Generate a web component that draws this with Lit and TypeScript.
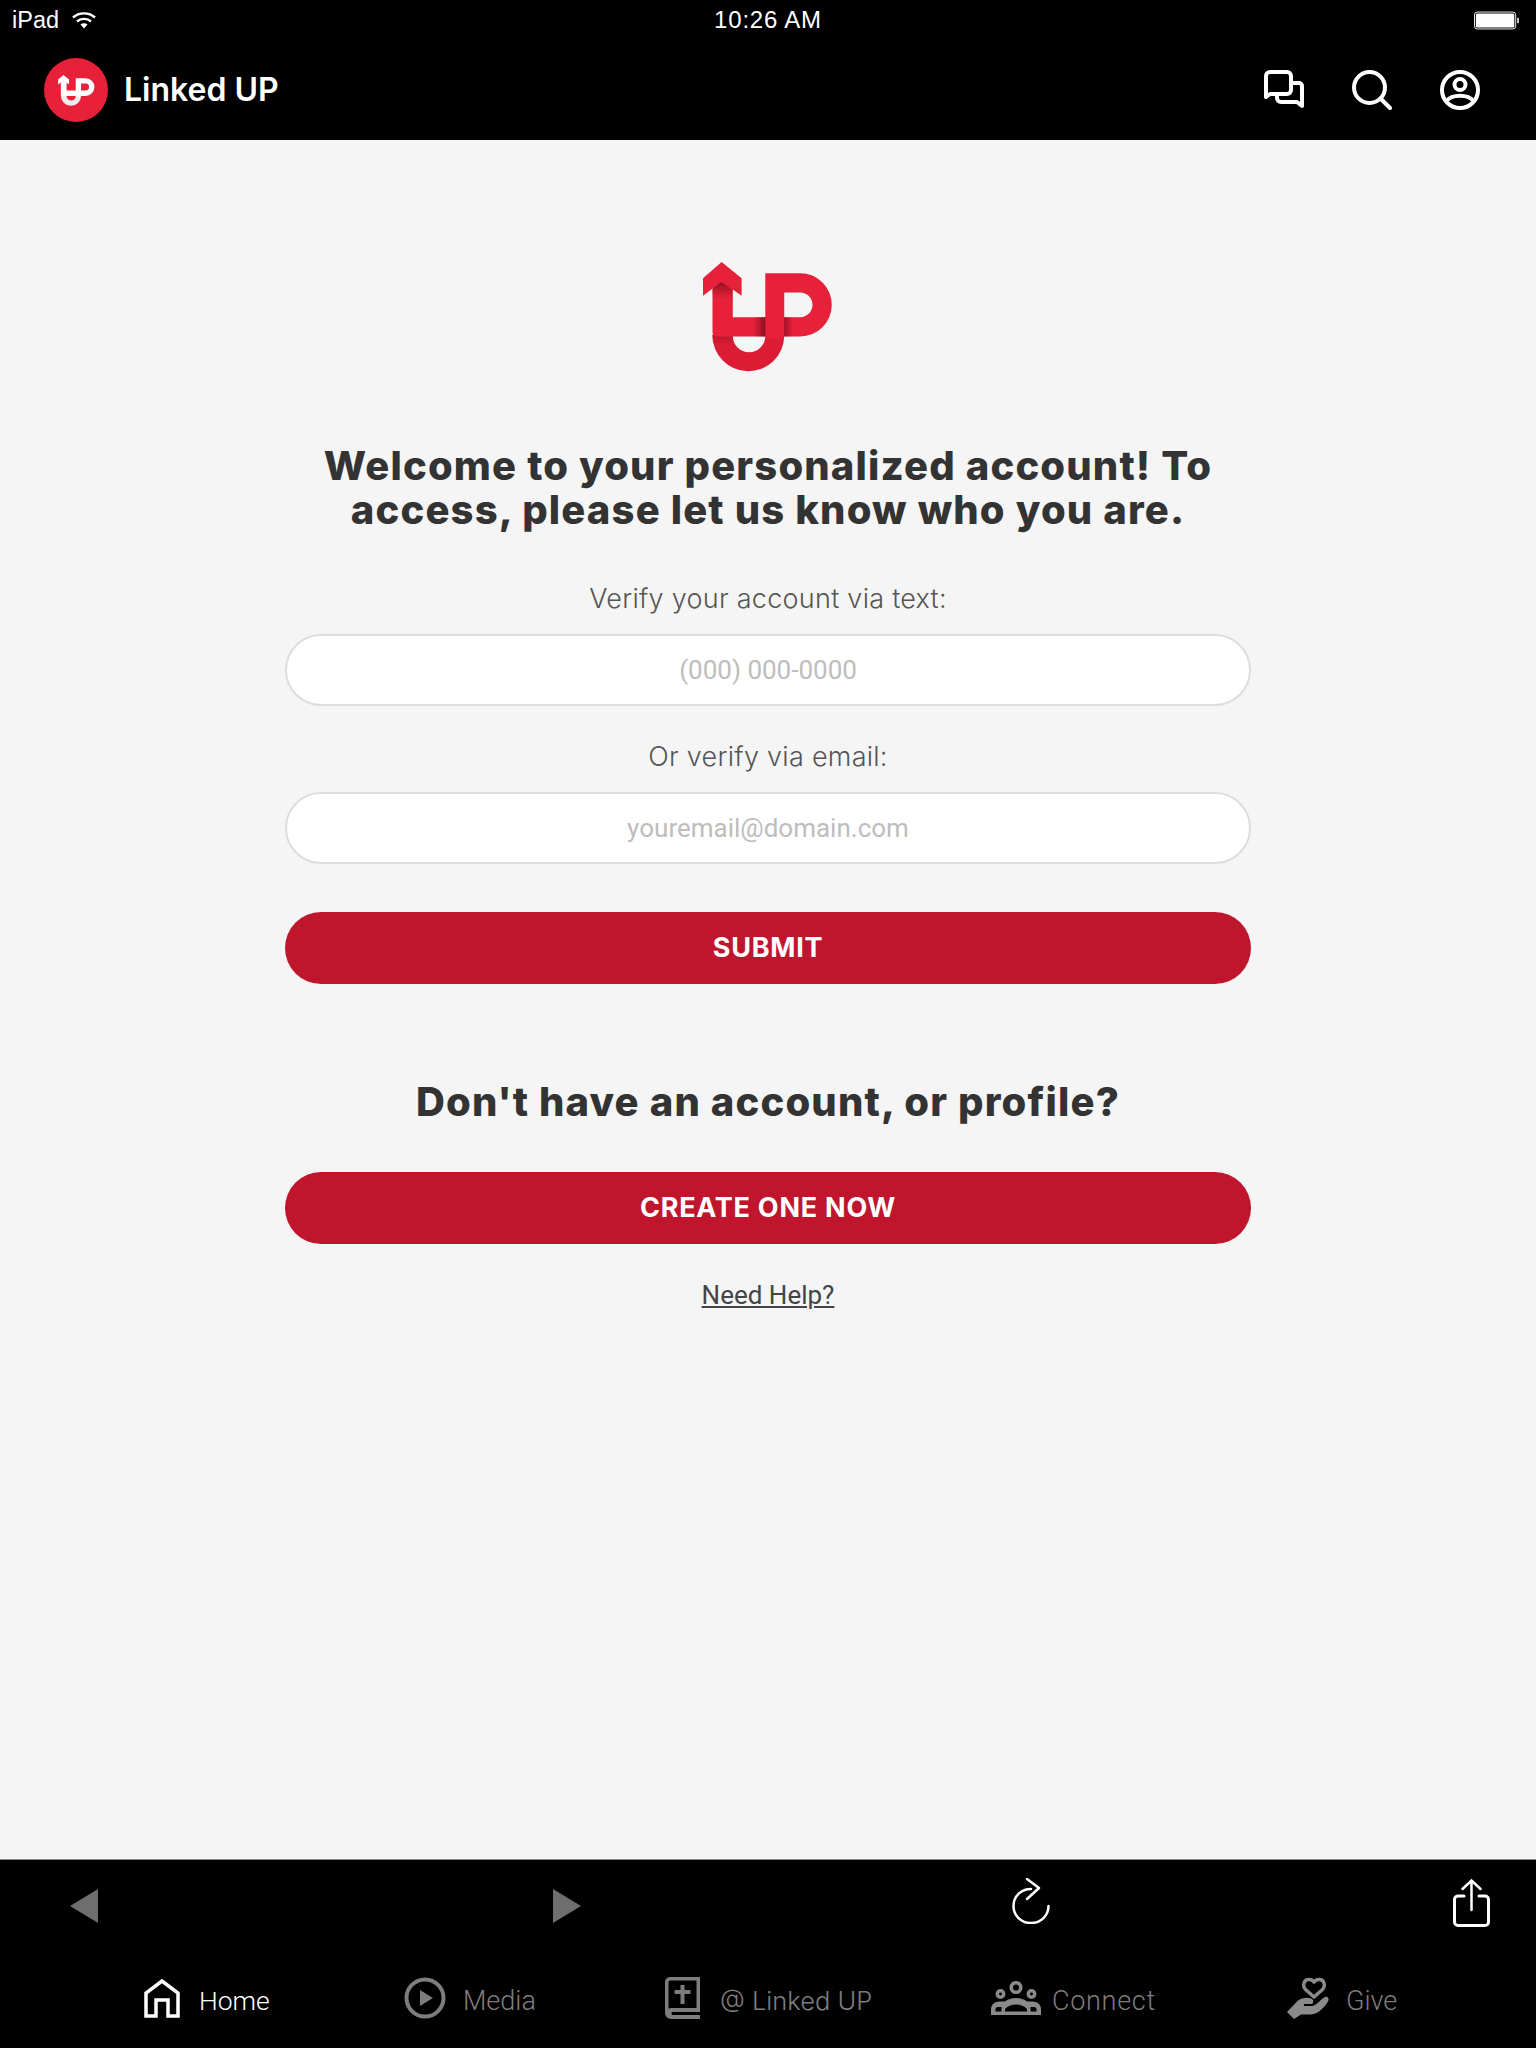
import { LitElement, html, css } from "lit";
import { customElement } from "lit/decorators.js";

const logo = (cls: string, mono: boolean) => {
  const a = mono ? "#fff" : "#e8213a";
  const b = mono ? "#ececec" : "#dc1c35";
  const k = mono ? "m" : "c";
  return html`<svg class=${cls} viewBox="98 70 384 325">
    <defs>
      <linearGradient id="${k}1" x1="0" x2="1" y1="0" y2="0"><stop offset="0" stop-color="#8c0e1e" stop-opacity="0"/><stop offset="1" stop-color="#7c0c1a" stop-opacity="${mono ? 0 : 0.85}"/></linearGradient>
      <linearGradient id="${k}2" x1="0" x2="1" y1="0" y2="0"><stop offset="0" stop-color="#7c0c1a" stop-opacity="${mono ? 0 : 0.7}"/><stop offset="1" stop-color="#8c0e1e" stop-opacity="0"/></linearGradient>
      <linearGradient id="${k}3" x1="0" x2="0" y1="0" y2="1"><stop offset="0" stop-color="#7c0c1a" stop-opacity="${mono ? 0 : 0.8}"/><stop offset="1" stop-color="#8c0e1e" stop-opacity="0"/></linearGradient>
      <linearGradient id="${k}4" x1="0" x2="0" y1="0" y2="1"><stop offset="0" stop-color="#a01226" stop-opacity="${mono ? 0 : 0.55}"/><stop offset="1" stop-color="#a01226" stop-opacity="0"/></linearGradient>
    </defs>
    <path fill=${b} d="M126 285A106 106 0 0 0 338 289V280H282V289A47 47 0 0 1 186 289V285Z"/>
    <rect x="126" y="285" width="60" height="30" fill="url(#${k}4)"/>
    <path fill=${a} fill-rule="evenodd" d="M282 103H385A93.500 93.500 0 0 1 385 290H338V289A53 53 0 0 1 282 289V290H140Q126 290 126 276V133L153 128 186 140V233H282ZM338 160V233H385A36.500 36.500 0 0 0 385 160Z"/>
    <rect x="245" y="233" width="37" height="57" fill="url(#${k}1)"/>
    <rect x="338" y="233" width="26" height="57" fill="url(#${k}2)"/>
    <path d="M126 142 153 128 186 152V180H126Z" fill="url(#${k}3)"/>
    <path fill=${a} d="M98 170V118L153 70 212 118V170L153 128Z"/>
  </svg>`;
};

@customElement("app-root")
export class AppRoot extends LitElement {
  static styles = css`
    :host { display: block; width: 1536px; height: 2048px; background: #f5f5f5; font-family: "Roboto", sans-serif; }
    .page { display: flex; flex-direction: column; height: 2048px; }
    .top { background: #000; color: #fff; height: 140px; flex: none; display: flex; flex-direction: column; }
    .status { position: relative; height: 40px; display: flex; align-items: center; justify-content: space-between; padding: 0 17px 0 12px; font-family: "Liberation Sans", sans-serif; font-size: 23.500px; }
    .status-left { display: flex; align-items: center; gap: 13px; }
    .time { position: absolute; left: 0; right: 0; text-align: center; font-size: 24px; letter-spacing: 0.800px; }
    .wifi { width: 24px; height: 18px; }
    .battery { width: 45px; height: 19px; display: block; }
    .appbar { flex: 1; display: flex; align-items: center; padding: 0 56px 2px 44px; }
    .badge { width: 64px; height: 64px; border-radius: 50%; background: #e8213a; display: flex; align-items: center; justify-content: center; margin-top: 2px; }
    .mini { width: 37px; height: 31px; }
    .brand { margin-left: 16px; font-family: "Inter", sans-serif; font-weight: 600; font-size: 32px; flex: 1; }
    .actions { display: flex; gap: 48px; align-items: center; margin-top: 2px; }
    .actions svg { width: 40px; height: 40px; display: block; fill: none; stroke: #fff; stroke-width: 4; }
    main { flex: 1; display: flex; flex-direction: column; align-items: center; padding-top: 122px; }
    .hero { width: 130px; height: 110px; display: block; }
    h1, h2 { margin: 0; font-family: "Inter", sans-serif; font-weight: 800; color: #333; text-align: center; font-size: 40px; letter-spacing: 1.150px; }
    h1 { margin-top: 72px; line-height: 44px; width: 966px; }
    h2 { margin-top: 94px; line-height: 48px; }
    .label { font-family: "Inter", sans-serif; font-weight: 300; font-size: 27px; line-height: 34px; letter-spacing: 0.270px; color: #555; text-align: center; }
    .label.first { margin-top: 50px; }
    .label.second { margin-top: 34px; }
    input { display: block; box-sizing: border-box; width: 966px; height: 72px; margin-top: 18px; border: 2px solid #ddd; border-radius: 36px; background: #fff; text-align: center; font-family: "Roboto", sans-serif; font-size: 26px; outline: none; }
    input::placeholder { color: #bdbdbd; opacity: 1; }
    button { display: block; width: 966px; height: 72px; border: 0; border-radius: 36px; padding: 0 0 2px; background: #bf162e; color: #fff; font-family: "Inter", sans-serif; font-weight: 700; font-size: 27px; letter-spacing: 0.750px; }
    .submit { margin-top: 48px; }
    .create { margin-top: 46px; }
    .help { margin-top: 36px; font-size: 26px; line-height: 30px; color: #444; text-decoration: underline; }
    .bottom { background: #000; height: 189px; flex: none; border-top: 1px solid #8a8a8a; box-sizing: border-box; display: flex; flex-direction: column; }
    .tools { height: 113px; flex: none; display: flex; align-items: flex-start; padding-left: 70px; }
    .tools svg { display: block; }
    .t-prev { margin-top: 29px; width: 28px; height: 34px; }
    .t-next { margin-top: 29px; margin-left: 455px; width: 28px; height: 34px; }
    .t-reload { margin-top: 18px; margin-left: 431px; width: 38px; height: 46px; }
    .t-share { margin-top: 19px; margin-left: 403px; width: 37px; height: 48px; }
    .tabs { display: grid; grid-template-columns: 260px 261px 326px 296px auto; align-items: center; padding: 0 0 0 144px; height: 55px; }
    .tab { display: flex; align-items: center; color: #7d7d7d; font-size: 27px; font-weight: 300; }
    .tab.on { color: #fff; font-size: 26.500px; }
    .tab svg { display: block; margin-bottom: 5px; }
    .tab .inter { font-family: "Inter", sans-serif; font-size: 25.500px; }
    .tab .wide { letter-spacing: 0.700px; }
    .ic-home { width: 36px; height: 40px; margin-right: 19px; }
    .ic-media { width: 42px; height: 42px; margin-right: 17px; }
    .ic-book { width: 35px; height: 42px; margin-right: 20px; }
    .ic-conn { width: 50px; height: 34px; margin-right: 11px; }
    .ic-give { width: 42px; height: 42px; margin-right: 17px; }
  `;

  render() {
    return html`<div class="page">
      <div class="top">
        <div class="status">
          <div class="status-left">iPad
            <svg class="wifi" viewBox="0 0 24 18" fill="none" stroke="#fff" stroke-width="2.400">
              <path d="M1 6.500C7 1 17 1 23 6.500M5 10.500C9 7 15 7 19 10.500"/><path d="M8.500 13.500 12 17.500 15.500 13.500C13.500 11.800 10.500 11.800 8.500 13.500Z" fill="#fff" stroke="none"/>
            </svg>
          </div>
          <div class="time">10:26 AM</div>
          <svg class="battery" viewBox="0 0 48 19">
            <rect x="0.500" y="0.500" width="44" height="18" rx="3" fill="none" stroke="#fff"/>
            <rect x="2" y="2" width="41" height="15" rx="1.500" fill="#fff"/>
            <path d="M46 6.500h1.500a1 1 0 0 1 .5 1v4a1 1 0 0 1-.5 1H46Z" fill="#ccc"/>
          </svg>
        </div>
        <div class="appbar">
          <div class="badge">${logo("mini", true)}</div>
          <div class="brand">Linked UP</div>
          <div class="actions">
            <svg viewBox="0 0 40 40"><path d="M2 27V6a4 4 0 0 1 4-4H23a4 4 0 0 1 4 4V20a4 4 0 0 1-4 4H6Z" stroke-linejoin="round"/><path d="M27 13H35a3 3 0 0 1 3 3V36L33 32H17a4 4 0 0 1-4-4V24" stroke-linejoin="round"/></svg>
            <svg viewBox="0 0 40 40" stroke-linecap="round"><circle cx="17.500" cy="17.500" r="15.500"/><path d="M28.500 28.500 38 38"/></svg>
            <svg viewBox="0 0 40 40"><circle cx="20" cy="20" r="18"/><circle cx="20" cy="14.500" r="5.500"/><path d="M6.500 31C12 24 28 24 33.500 31"/></svg>
          </div>
        </div>
      </div>
      <main>
        ${logo("hero", false)}
        <h1>Welcome to your personalized account! To access, please let us know who you are.</h1>
        <div class="label first">Verify your account via text:</div>
        <input placeholder="(000) 000-0000" />
        <div class="label second">Or verify via email:</div>
        <input placeholder="youremail@domain.com" />
        <button class="submit">SUBMIT</button>
        <h2>Don't have an account, or profile?</h2>
        <button class="create">CREATE ONE NOW</button>
        <div class="help">Need Help?</div>
      </main>
      <div class="bottom">
        <div class="tools">
          <svg class="t-prev" viewBox="0 0 28 34"><path d="M0 17 28 0V34Z" fill="#6e6e6e"/></svg>
          <svg class="t-next" viewBox="0 0 28 34"><path d="M28 17 0 0V34Z" fill="#6e6e6e"/></svg>
          <svg class="t-reload" viewBox="0 0 38 46" fill="none" stroke="#fff" stroke-width="2.500" stroke-linecap="round" stroke-linejoin="round"><path d="M19 11C9 11 1.500 18.500 1.500 28S9 45 19 45 36.500 37.500 36.500 28"/><path d="M15 1 27 10 15 21"/></svg>
          <svg class="t-share" viewBox="0 0 37 48" fill="none" stroke="#fff" stroke-width="3" stroke-linecap="round"><path d="M11 17H5a3.500 3.500 0 0 0-3.500 3.500V43A3.500 3.500 0 0 0 5 46.500H32A3.500 3.500 0 0 0 35.500 43V20.500A3.500 3.500 0 0 0 32 17H26"/><path d="M18.500 31V2M9.500 10 18.500 1.500 27.500 10" stroke-width="2.500"/></svg>
        </div>
        <div class="tabs">
          <div class="tab on">
            <svg class="ic-home" viewBox="0 0 36 40" fill="none" stroke="#fff" stroke-width="3.500"><path d="M2 38V15L18 3 34 15V38H24V22H12V38Z"/></svg>Home
          </div>
          <div class="tab">
            <svg class="ic-media" viewBox="0 0 42 42" fill="none" stroke="#7d7d7d" stroke-width="4"><circle cx="21" cy="21" r="18.500"/><path d="M16 13 29 21 16 29Z" fill="#7d7d7d" stroke="none"/></svg>Media
          </div>
          <div class="tab">
            <svg class="ic-book" viewBox="0 0 35 42"><path fill="#7d7d7d" fill-rule="evenodd" d="M5 0H35V35H7a2.500 2.500 0 0 0 0 3H35V42H6A6 6 0 0 1 0 36V5A5 5 0 0 1 5 0ZM5 3.500A1.500 1.500 0 0 0 3.500 5V31.700A6 6 0 0 1 6 31H31.500V3.500Z"/><path fill="#7d7d7d" d="M15.500 8H19.500V13H25.500V17H19.500V27H15.500V17H9.500V13H15.500Z"/></svg><span class="inter">@ Linked UP</span>
          </div>
          <div class="tab">
            <svg class="ic-conn" viewBox="0 0 50 34"><g fill="none" stroke="#8a8a8a" stroke-width="3.500"><circle cx="25" cy="6.500" r="4.800"/><circle cx="9.500" cy="13" r="3.200"/><circle cx="40.500" cy="13" r="3.200"/></g><path fill="#8a8a8a" fill-rule="evenodd" d="M0 34V28Q0 21.500 8 20.500H14Q18 17 25 17T36 20.500H42Q50 21.500 50 28V34ZM4.500 30.500H10.500V26H7Q4.500 26 4.500 28ZM14 30.500H36V28Q32 23.500 25 23.500T14 28ZM39.500 30.500H45.500V28Q45.500 26 43 26H39.500Z"/></svg><span class="wide">Connect</span>
          </div>
          <div class="tab">
            <svg class="ic-give" viewBox="0 0 42 42"><path fill="none" stroke="#8a8a8a" stroke-width="3.500" stroke-linejoin="round" d="M27 20 18.500 12.500C15 9 17 3 21 2.500 24 2 26 3.500 27 5 28 3.500 30 2 33 2.500 37 3 39 9 35.500 12.500Z"/><path fill="#8a8a8a" d="M0 35 11 23.500C15 21 20 20 24 21.500 27 22.500 27 26.500 24 27H17V29H25C29 29 35 21 38 20 41 19 42.500 22 41 24.500 37 31 31 37 24 37.500H14L7 42Z"/></svg>Give
          </div>
        </div>
      </div>
    </div>`;
  }
}
